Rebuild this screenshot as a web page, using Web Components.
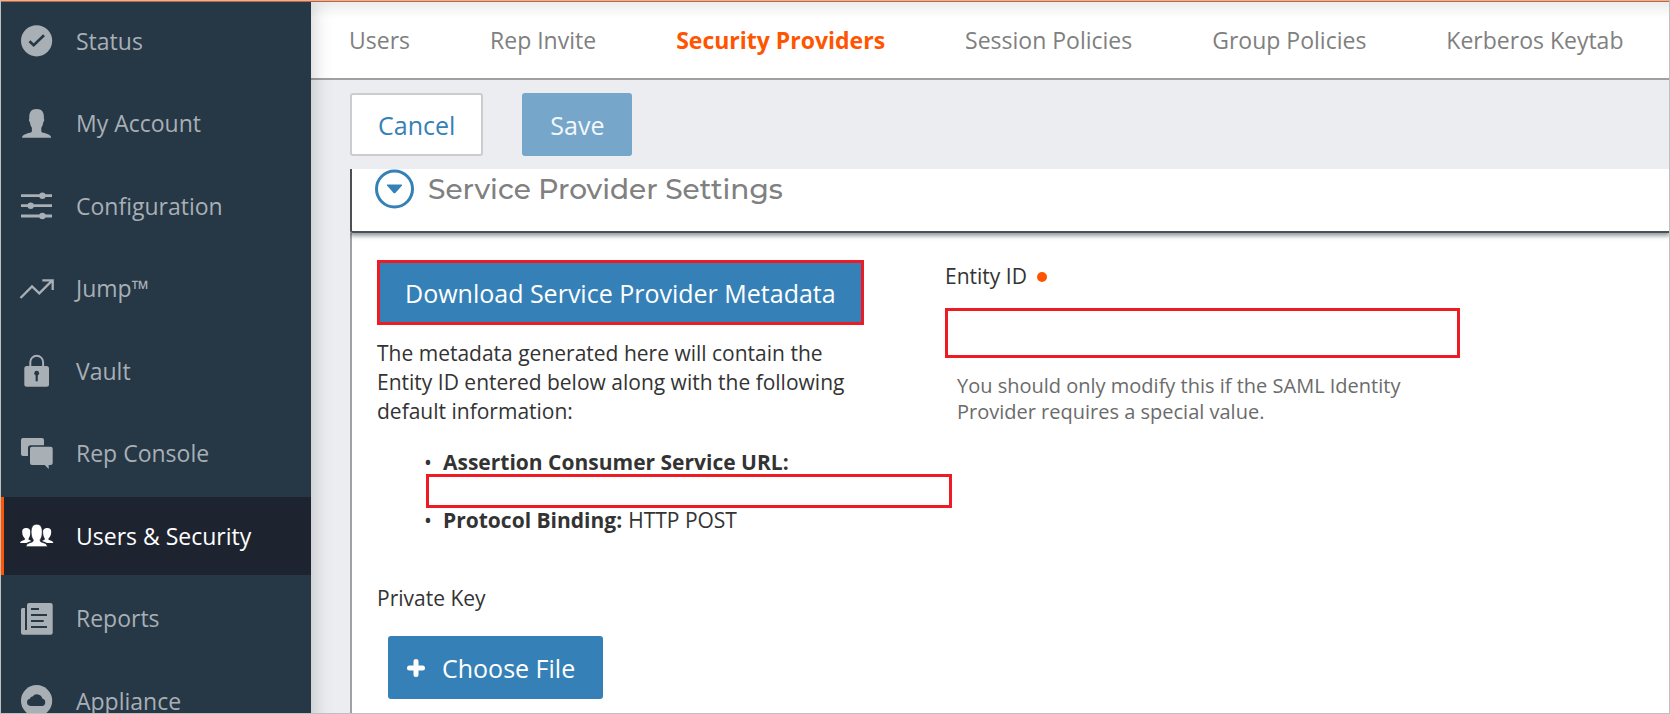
<!DOCTYPE html>
<html lang="en">
<head>
<meta charset="utf-8">
<meta name="viewport" content="width=device-width, initial-scale=1">
<title>Security Providers</title>
<style>
  html, body { margin: 0; height: 100%; }
  body {
    font-family: "Open Sans", "Noto Sans", sans-serif;
    color: #333;
    --blue: #3581b7;
    --orange: #ff5500;
    --red: #ed1c24;
    --grey: #808080;
    --rule: #a0a0a0;
  }
</style>
</head>
<body>
<app-shell>
  <side-nav slot="nav">
    <nav-item icon="status">Status</nav-item>
    <nav-item icon="account">My Account</nav-item>
    <nav-item icon="config">Configuration</nav-item>
    <nav-item icon="jump">Jump™</nav-item>
    <nav-item icon="vault">Vault</nav-item>
    <nav-item icon="console">Rep Console</nav-item>
    <nav-item icon="users" active>Users &amp; Security</nav-item>
    <nav-item icon="reports">Reports</nav-item>
    <nav-item icon="appliance">Appliance</nav-item>
  </side-nav>
  <tab-bar>
    <tab-link>Users</tab-link>
    <tab-link>Rep Invite</tab-link>
    <tab-link active>Security Providers</tab-link>
    <tab-link>Session Policies</tab-link>
    <tab-link>Group Policies</tab-link>
    <tab-link>Kerberos Keytab</tab-link>
  </tab-bar>
  <action-bar>
    <action-button kind="outline">Cancel</action-button>
    <action-button kind="muted">Save</action-button>
  </action-bar>
  <settings-section>
    <span slot="title">Service Provider Settings</span>
    <metadata-panel></metadata-panel>
    <entity-field></entity-field>
  </settings-section>
</app-shell>

<script>
const define = (name, html, setup) => {
  const template = document.createElement('template');
  template.innerHTML = html;
  customElements.define(name, class extends HTMLElement {
    constructor() {
      super();
      this.attachShadow({ mode: 'open' }).append(template.content.cloneNode(true));
    }
    connectedCallback() { if (setup) setup(this, this.shadowRoot); }
  });
};

const icons = {
  status: `<circle cx="17.6" cy="17.8" r="15.6"/><path d="M10.5 18.3l4.2 4L25 12.3" fill="none" stroke="var(--hole)" stroke-width="2.6"/>`,
  account: `<path d="M3 32.7c.4-3 4-3.9 8-4.9 1.6-.4 1.9-1 1.9-2.6v-2.4c-1.2-1.8-1.8-3.8-2-5.8-.9-.3-1.3-3-.6-3.3C9.8 7 12.4 4 17.6 4s7.8 3 7.3 9.7c.7.3.3 3-.6 3.3-.2 2-.8 4-2 5.8v2.4c0 1.6.3 2.2 1.9 2.6 4 1 7.6 1.9 8 4.9z"/>`,
  config: `<path d="M2 7.7h31M2 17.7h31M2 28h31" fill="none" stroke="currentColor" stroke-width="2.8"/><circle cx="23.4" cy="7.7" r="3.2"/><circle cx="11.7" cy="17.7" r="3.2"/><circle cx="23.4" cy="28" r="3.2"/>`,
  jump: `<path d="M1.5 28L13 16.4l7.3 7L33.3 10.4M23.3 10.3h10.4v9.8" fill="none" stroke="currentColor" stroke-width="2.3"/>`,
  vault: `<rect x="5.3" y="13" width="24.7" height="20.7" rx="2.5"/><path d="M11.3 14V9a6.4 6.2 0 0 1 12.8 0v5" fill="none" stroke="currentColor" stroke-width="2"/><circle cx="17.7" cy="20.2" r="2.4" fill="var(--hole)"/><path d="M17.7 20v8.3" stroke="var(--hole)" stroke-width="2.2"/>`,
  console: `<path d="M4 3h19a2 2 0 0 1 2 2v5.3H11.5A2.5 2.5 0 0 0 9 12.8V21H4a2 2 0 0 1-2-2V5a2 2 0 0 1 2-2z"/><path d="M13 11.7h18.7a2 2 0 0 1 2 2V28a2 2 0 0 1-2 2h-2v4l-4-4H13a2 2 0 0 1-2-2V13.7a2 2 0 0 1 2-2z"/>`,
  users: `<path d="M1 25c.5-2 2.5-2.5 4.3-3 .8-.3.8-1 .4-1.800C4 18.500 3.300 16.800 3.200 14 3 11.500 4.500 10 7 10s4.500 1 4.300 4c0 2.500-.3 4.500-1.500 6.200-.5 1-.3 1.600.5 1.800 1 .4 1.700.7 2 1-2 .7-3.800 1.200-4.800 2z"/><path d="M34.400 25c-.5-2-2.500-2.500-4.300-3-.8-.3-.8-1-.4-1.800 1.700-1.700 2.400-3.400 2.500-6.200.2-2.500-1.300-4-3.800-4s-4.500 1-4.300 4c0 2.500.3 4.500 1.500 6.200.5 1 .3 1.600-.5 1.800-1 .4-1.700.7-2 1 2 .7 3.800 1.200 4.800 2z"/><path d="M7 28.700c.3-3 2.500-3.600 5.500-4.500 1.800-.5 2-1.500 1.600-2.800-1.200-1.500-1.700-3.500-1.900-5.900-.3-5 .8-9.300 5.500-9.300s5.800 4.300 5.500 9.300c-.2 2.400-.7 4.400-1.900 5.900-.4 1.300-.2 2.300 1.600 2.800 3 .9 5.200 1.500 5.500 4.500z" stroke="var(--hole)" stroke-width=".7"/>`,
  reports: `<path d="M10 3h21.700a2 2 0 0 1 2 2v27.700a2 2 0 0 1-2 2H4a2 2 0 0 1-2-2V9.500A1.500 1.500 0 0 1 3.500 8H6v22h2V5a2 2 0 0 1 2-2z"/><path d="M12 9h8M12 15h16M12 21h12.700M12 27h16" stroke="var(--hole)" stroke-width="2"/>`,
  appliance: `<circle cx="17.6" cy="17.7" r="15.6"/><path d="M11.500 23a3.700 3.700 0 0 1-.6-7.300 3 3 0 0 1 2.700-2.200 5.500 5.500 0 0 1 9.700 2A3.900 3.900 0 0 1 23.500 23z" fill="var(--hole)"/>`
};

define('app-shell', `
  <style>
    :host { display: grid; grid-template-columns: 310px minmax(0, 1fr); box-sizing: border-box;
      height: 100vh; overflow: hidden; border: 1px solid #bfbfbf; background: #ecedf1; }
    nav { border-top: 1px solid #e65a1a; background: #263746; box-shadow: 0 0 20px rgba(0,0,0,.22); z-index: 1; }
    main { border-top: 1px solid #e65a1a; display: flex; flex-direction: column; min-width: 0; }
  </style>
  <nav aria-label="Main"><slot name="nav"></slot></nav>
  <main><slot></slot></main>`);

define('side-nav', `
  <style>
    :host { display: block; }
    ::slotted(*) { margin-bottom: 4px; }
    ::slotted(:nth-child(even)) { margin-bottom: 5px; }
  </style>
  <slot></slot>`);

define('nav-item', `
  <style>
    :host { display: block; --hole: #263746; }
    :host([active]) { --hole: #1e242f; }
    a { display: flex; align-items: center; gap: 21px; height: 78px; box-sizing: border-box; padding-left: 15px;
      border-left: 3px solid transparent; color: #a8afb5; font-size: 23px; line-height: 32px; text-decoration: none; }
    :host([active]) a { color: #fff; background: #1e242f; border-left-color: var(--orange); }
    svg { flex: none; width: 36px; height: 36px; fill: currentColor; }
  </style>
  <a href="#"><svg viewBox="0 0 36 36" aria-hidden="true"></svg><span><slot></slot></span></a>`,
  (host, root) => {
    root.querySelector('svg').innerHTML = icons[host.getAttribute('icon')];
    if (host.hasAttribute('active')) root.querySelector('a').setAttribute('aria-current', 'page');
  });

define('tab-bar', `
  <style>
    :host { display: block; flex: none; }
    nav { display: flex; align-items: center; gap: 80px; height: 76px; padding-left: 38px;
      border-bottom: 2px solid var(--rule); background: linear-gradient(#ececec, #fff 16px); white-space: nowrap; }
  </style>
  <nav aria-label="Users and security"><slot></slot></nav>`);

define('tab-link', `
  <style>
    :host { display: block; }
    a { display: block; color: var(--grey); font-size: 23px; line-height: 32px; text-decoration: none; }
    :host([active]) a { color: var(--orange); font-weight: 700; }
  </style>
  <a href="#"><slot></slot></a>`,
  (host, root) => { if (host.hasAttribute('active')) root.querySelector('a').setAttribute('aria-current', 'page'); });

define('action-bar', `
  <style>
    :host { display: flex; flex: none; gap: 39px; padding: 13px 39px; }
  </style>
  <slot></slot>`);

define('action-button', `
  <style>
    :host { display: inline-block; }
    button { display: flex; align-items: center; gap: 17px; height: 63px; box-sizing: border-box; padding: 0 28px;
      border: 0; border-radius: 3px; background: var(--blue); color: #fff; font: 25px/34px "Open Sans", "Noto Sans", sans-serif; white-space: nowrap; }
    :host([kind=outline]) button { padding: 0 26px; border: 2px solid #ccc; background: #fff; color: var(--blue); }
    :host([kind=muted]) button { background: #76a6ca; color: #f3f7fb; }
    :host([kind=marked]) button { height: 65px; padding: 0 25px; border: 3px solid var(--red); border-radius: 0; }
    :host([kind=file]) button { padding: 0 28px 0 19px; }
  </style>
  <button type="button"><slot name="icon"></slot><span><slot></slot></span></button>`);

define('settings-section', `
  <style>
    :host { display: flex; flex: 1; flex-direction: column; margin-left: 39px; background: #fff; }
    header { display: flex; align-items: center; gap: 14px; height: 40px; padding: 0 0 22px 23px;
      border: solid #4b5053; border-width: 0 0 2px 2px; border-bottom-left-radius: 3px; background: #fff;
      box-shadow: 0 2px 4px 1px rgba(60,75,80,.55); clip-path: inset(0 0 -8px 0); position: relative; }
    h2 { margin: 0; color: var(--grey); font: 500 28px Montserrat, Inter, sans-serif; }
    button { width: 39px; height: 40px; padding: 0; border: 0; background: none; }
    svg { display: block; width: 39px; height: 40px; }
    .body { flex: 1; display: grid; grid-template-columns: minmax(0, 488px) minmax(0, 515px); gap: 80px;
      align-items: start; padding: 27px 25px 0; border-left: 2px solid var(--rule); }
  </style>
  <header>
    <button type="button" aria-label="Collapse section" aria-expanded="true">
      <svg viewBox="0 0 39 40"><circle cx="19.5" cy="20" r="18" fill="none" stroke="#3581b7" stroke-width="3"/><path d="M12 16.500q-.5-1 .6-1h13.800q1.100 0 .6 1l-6.600 7.400q-.9.900-1.800 0z" fill="#3581b7"/></svg>
    </button>
    <h2><slot name="title"></slot></h2>
  </header>
  <div class="body"><slot></slot></div>`);

define('metadata-panel', `
  <style>
    :host { display: block; color: #333; font-size: 21px; line-height: 29px; }
    p { margin: 14px 0 22px; }
    ul { margin: 0; padding: 0; list-style: none; }
    li { display: flex; flex-wrap: wrap; column-gap: 6px; padding-left: 66px; }
    li::before { content: "•"; width: 19px; margin: 0 -6px 0 -19px; font-size: 21px; }
    input { flex: none; width: 526px; height: 34px; box-sizing: border-box; margin: -3px 0 -2px -17px;
      border: 3px solid var(--red); background: #fff; font: inherit; }
    h3 { margin: 49px 0 23px; font: inherit; }
    .file { margin-left: 11px; }
    svg { display: block; width: 18px; height: 18px; }
  </style>
  <action-button kind="marked">Download Service Provider Metadata</action-button>
  <p>The metadata generated here will contain the Entity ID entered below along with the following default information:</p>
  <ul>
    <li><label for="acs"><b>Assertion Consumer Service URL:</b></label><input id="acs" type="text" readonly></li>
    <li><b>Protocol Binding:</b> HTTP POST</li>
  </ul>
  <h3>Private Key</h3>
  <action-button class="file" kind="file"><svg slot="icon" viewBox="0 0 18 18" aria-hidden="true"><path d="M9 2.500v13M2.500 9h13" stroke="#fff" stroke-width="5" stroke-linecap="round"/></svg>Choose File</action-button>`);

define('entity-field', `
  <style>
    :host { display: block; font-size: 21px; line-height: 29px; }
    label { display: flex; align-items: center; gap: 10px; color: #333; margin-top: 2px; }
    i { width: 10px; height: 10px; border-radius: 50%; background: var(--orange); }
    input { display: block; width: 100%; height: 50px; box-sizing: border-box; margin: 17px 0 15px;
      padding: 0 12px; border: 3px solid var(--red); background: #fff; font: inherit; }
    p { margin: 0; padding: 0 12px; color: #6b6b6b; font-size: 20px; line-height: 26px; }
  </style>
  <label for="entity">Entity ID<i></i></label>
  <input id="entity" type="text" required aria-describedby="hint">
  <p id="hint">You should only modify this if the SAML Identity Provider requires a special value.</p>`);
</script>
</body>
</html>
